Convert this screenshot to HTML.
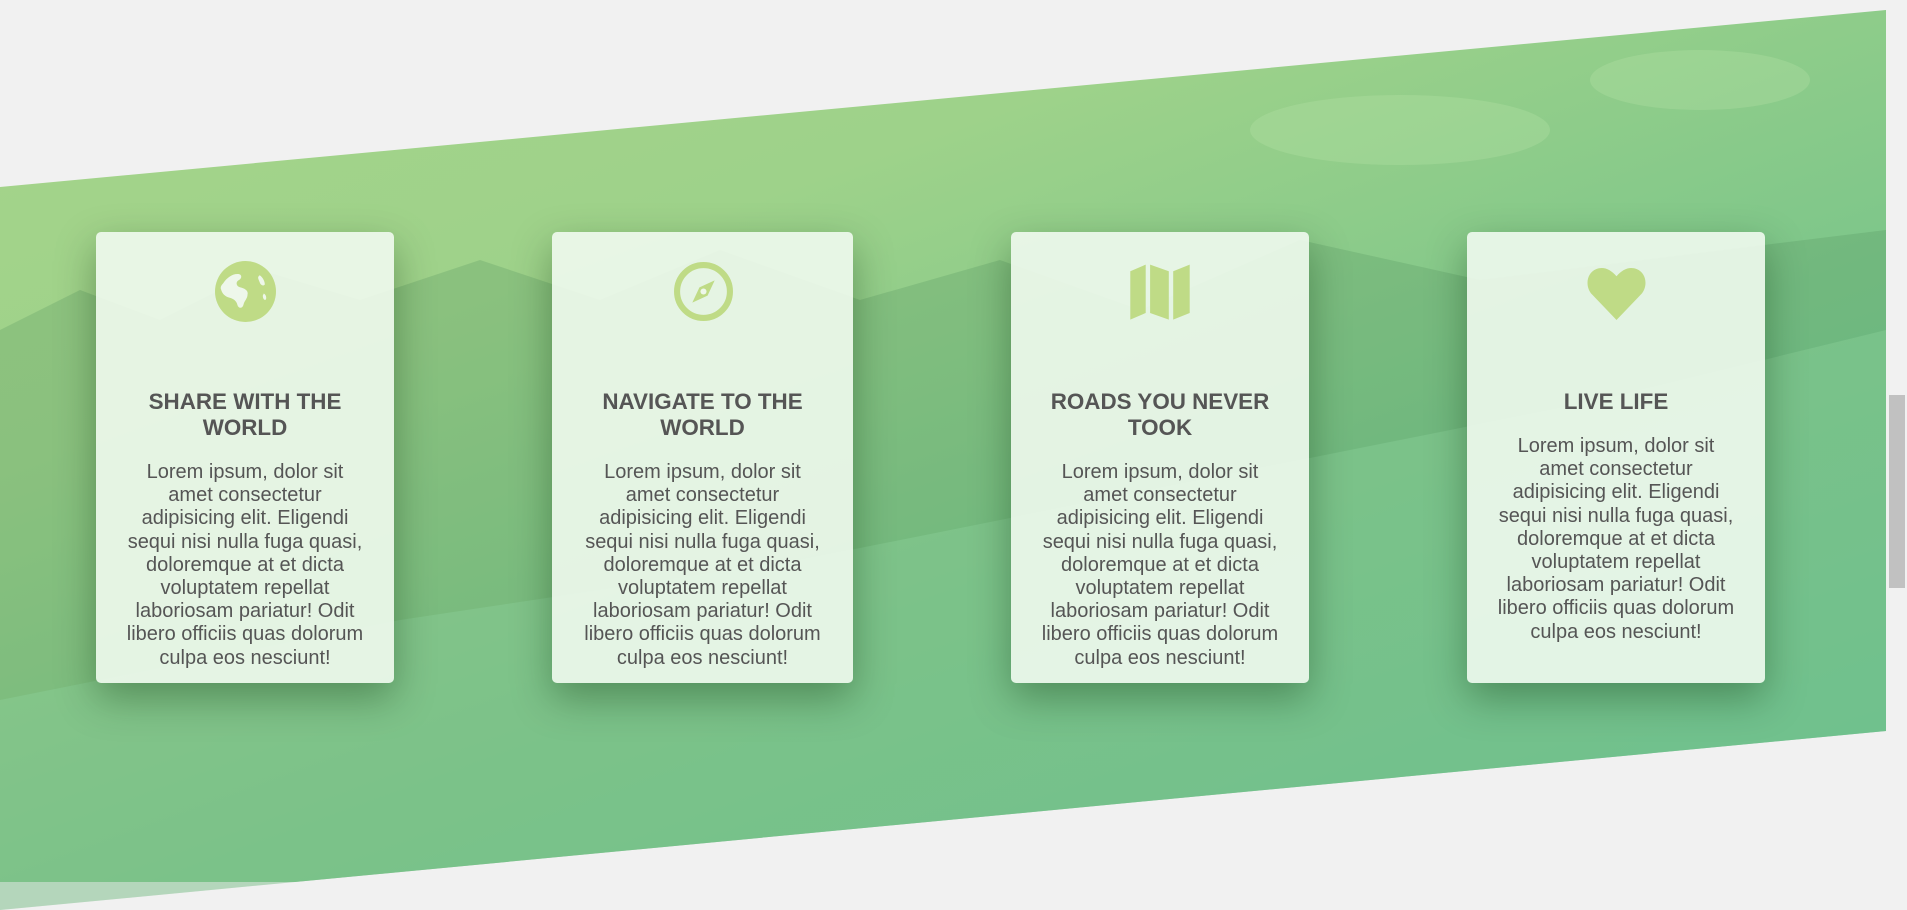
<!DOCTYPE html>
<html><head><meta charset="utf-8"><style>
html,body{margin:0;padding:0;}
body{width:1907px;height:882px;background:#f1f1f1;position:relative;overflow:hidden;font-family:"Liberation Sans",Arial,sans-serif;}
.sec{position:absolute;left:0;top:0;width:1886px;height:882px;clip-path:polygon(0 187px,1886px 10px,1886px 731px,0 910px);
background:linear-gradient(160deg,#a6d48a 0%,#9ed28a 30%,#7dc68a 60%,#5ec496 100%);}
.card{position:absolute;top:232px;height:451px;width:298px;background:rgba(240,249,238,0.9);border-radius:5px;box-shadow:0 15px 40px rgba(0,40,0,0.35);color:#555;text-align:center;}
.card svg{position:absolute;left:119px;top:29px;width:61px;height:61px;}
.t{position:absolute;left:18px;right:18px;font-weight:bold;font-size:22.4px;line-height:26px;}
.b{position:absolute;left:26.5px;right:26.5px;font-size:20px;line-height:23.2px;}
.sb{position:absolute;left:1889px;top:395px;width:16px;height:193px;background:#c1c1c1;}
</style></head><body>
<div class="sec">
<svg width="1886" height="910" style="position:absolute;left:0;top:0">
<polygon points="0,330 80,290 160,320 260,270 360,300 480,260 600,300 720,250 860,300 1000,260 1140,310 1300,240 1480,280 1886,230 1886,910 0,910" fill="#4f8f5a" opacity="0.25"/>
<polygon points="0,700 400,620 800,560 1200,480 1600,400 1886,330 1886,910 0,910" fill="#8fd59e" opacity="0.35"/>
<ellipse cx="1400" cy="130" rx="150" ry="35" fill="#b8e4a8" opacity="0.3"/>
<ellipse cx="1700" cy="80" rx="110" ry="30" fill="#b8e4a8" opacity="0.3"/>
</svg>
</div>
<div class="card" style="left:96px">
<svg viewBox="0 0 60 60"><circle cx="30" cy="30" r="30" fill="#bfdb86"/><path d="M8 22c4-6 10-10 16-9 3 1 2 5-1 6-3 2-2 6 2 7 4 1 8 3 7 7 0 4-3 6-4 10-1 4-5 4-6 0-1-4-4-6-8-7-4-1-7-4-8-8-1-2 0-4 2-6zM44 14c3 2 5 6 5 9-1 2-4 1-5-2-1-3-3-5 0-7zM48 32c2 1 3 4 2 6-2 1-3-2-3-4z" fill="#eef7ea"/></svg>
<div class="t" style="top:157px">SHARE WITH THE WORLD</div>
<div class="b" style="top:229px">Lorem ipsum, dolor sit amet consectetur adipisicing elit. Eligendi sequi nisi nulla fuga quasi, doloremque at et dicta voluptatem repellat laboriosam pariatur! Odit libero officiis quas dolorum culpa eos nesciunt!</div>
</div>
<div class="card" style="left:552px;width:301px">
<svg viewBox="0 0 60 60" style="left:121px"><circle cx="30" cy="30" r="26" fill="none" stroke="#bfdb86" stroke-width="6"/><path d="M41 19L34 34 19 41 26 26z" fill="#bfdb86"/><circle cx="30" cy="30" r="3" fill="#eef7ea"/></svg>
<div class="t" style="top:157px">NAVIGATE TO THE WORLD</div>
<div class="b" style="top:229px;left:28px;right:28px">Lorem ipsum, dolor sit amet consectetur adipisicing elit. Eligendi sequi nisi nulla fuga quasi, doloremque at et dicta voluptatem repellat laboriosam pariatur! Odit libero officiis quas dolorum culpa eos nesciunt!</div>
</div>
<div class="card" style="left:1011px">
<svg viewBox="0 0 60 60" style="left:116px;width:66px;height:66px;top:26px"><path d="M3 12l14-6v44L3 56zM21 6l17 6v44L21 50zM42 12l15-6v44l-15 6z" fill="#bfdb86"/></svg>
<div class="t" style="top:157px">ROADS YOU NEVER TOOK</div>
<div class="b" style="top:229px">Lorem ipsum, dolor sit amet consectetur adipisicing elit. Eligendi sequi nisi nulla fuga quasi, doloremque at et dicta voluptatem repellat laboriosam pariatur! Odit libero officiis quas dolorum culpa eos nesciunt!</div>
</div>
<div class="card" style="left:1467px">
<svg viewBox="0 0 60 60"><path d="M30 58L6 33C-1 26 0 12 10 8c7-3 14 0 20 7 6-7 13-10 20-7 10 4 11 18 4 25z" fill="#bfdb86"/></svg>
<div class="t" style="top:157px">LIVE LIFE</div>
<div class="b" style="top:203px">Lorem ipsum, dolor sit amet consectetur adipisicing elit. Eligendi sequi nisi nulla fuga quasi, doloremque at et dicta voluptatem repellat laboriosam pariatur! Odit libero officiis quas dolorum culpa eos nesciunt!</div>
</div>
<div class="sb"></div>
</body></html>
